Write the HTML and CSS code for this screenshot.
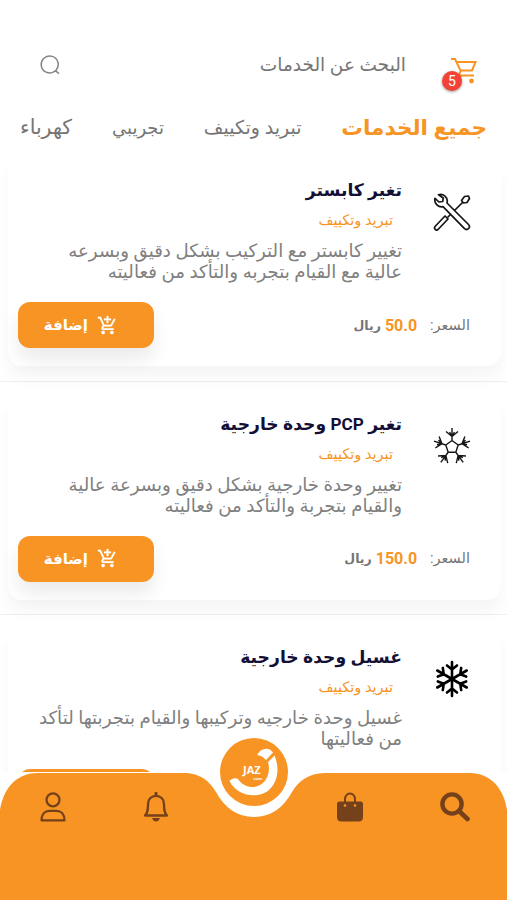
FILE: index.html
```html
<!DOCTYPE html>
<html lang="ar" dir="rtl">
<head>
    <meta charset="UTF-8">
    <meta name="viewport" content="width=device-width, initial-scale=1.0">
    <title>جميع الخدمات</title>
    <link rel="stylesheet" href="styles.css">
</head>
<body>
    <svg class="symbols" width="0" height="0">
        <symbol id="addCart" viewBox="0 0 24 24">
            <path fill="currentColor" stroke="currentColor" stroke-width="0.2" d="M11 9h2V6h3V4h-3V1h-2v3H8v2h3v3zm-4 9c-1.100 0-1.990.9-1.990 2S5.900 22 7 22s2-.9 2-2-.9-2-2-2zm10 0c-1.100 0-1.990.9-1.990 2s.89 2 1.990 2 2-.9 2-2-.9-2-2-2zm-9.830-3.250l.03-.12.9-1.630h7.450c.75 0 1.410-.41 1.750-1.030l3.860-7.010L19.420 4h-.01l-1.100 2-2.760 5H8.530l-.13-.27L6.160 6l-.95-2-.94-2H1v2h2l3.600 7.590-1.350 2.450c-.16.28-.25.61-.25.960 0 1.100.9 2 2 2h12v-2H7.420c-.13 0-.25-.11-.25-.25z"/>
        </symbol>
    </svg>

    <header class="header">
        <div class="search-row">
            <div class="cart">
                <svg width="26" height="28" viewBox="0 0 26 28" fill="none" stroke="#f79423" stroke-width="2">
                    <path d="M0 2h4l5.500 11.500h11.500l3.500-8.500H6M10 13.500l-2.500 5H23"/>
                    <circle cx="20.500" cy="24" r="2.400" fill="#f79423" stroke="none"/>
                </svg>
                <span class="badge">5</span>
            </div>
            <span class="search-text">البحث عن الخدمات</span>
            <svg class="search-icon" width="20" height="20" viewBox="0 0 20 20" fill="none" stroke="#858585" stroke-width="1.500">
                <path d="M16 15.200A8.500 8.500 0 1 0 14.200 16.700L15.600 15.800L19 18.600"/>
            </svg>
        </div>
        <nav class="tabs">
            <span class="tab active">جميع الخدمات</span>
            <span class="tab">تبريد وتكييف</span>
            <span class="tab trial">تجريبي</span>
            <span class="tab power">كهرباء</span>
        </nav>
    </header>

    <main class="list">
        <div class="item">
            <div class="card">
                <svg class="card-icon" width="38" height="38" viewBox="0 0 38 38" fill="#fff" stroke="#161616" stroke-width="1.700" stroke-linejoin="round">
                    <path d="M31 8L14.500 24.500"/>
                    <path d="M28.500 7.500l3-4 4-.5 1 2.500-2.500 4-3.500.5z"/>
                    <path d="M2 33.500L12 23l3 3L5 36.500c-2 1.500-4.500-1-3-3z"/>
                    <path d="M5.500 1.800C10 .3 15.500 4 14 10L35.500 31.500c2.800 3.200-1.500 6.300-4 4.200L10 13.700C5 14.500.8 10 2 5.300L6 9l3.700-.5.6-3.500z"/>
                </svg>
                <div class="card-body">
                    <h2 class="title">تغير كابستر</h2>
                    <p class="category">تبريد وتكييف</p>
                    <p class="desc">تغيير كابستر مع التركيب بشكل دقيق وبسرعه<br>عالية مع القيام بتجربه والتأكد من فعاليته</p>
                </div>
                <div class="card-footer">
                    <div class="price"><span>السعر:</span><b>50.0</b><span class="currency">ريال</span></div>
                    <button class="add"><svg width="21" height="21"><use href="#addCart"/></svg><span>إضافة</span></button>
                </div>
            </div>
        </div>

        <div class="item">
            <div class="card">
                <svg class="card-icon" width="38" height="38" viewBox="-19 -20 38 38" fill="none" stroke="#161616" stroke-width="1.400">
                    <g id="arm">
                        <path d="M0-6.500V-19M0-10.500L-6-15.500M0-10.500L6-15.500M0-11L-2.500-15M0-11L2.500-15"/>
                        <path d="M0-6.500L6.200-2"/>
                    </g>
                    <use href="#arm" transform="rotate(72)"/>
                    <use href="#arm" transform="rotate(144)"/>
                    <use href="#arm" transform="rotate(216)"/>
                    <use href="#arm" transform="rotate(288)"/>
                </svg>
                <div class="card-body">
                    <h2 class="title">تغير PCP وحدة خارجية</h2>
                    <p class="category">تبريد وتكييف</p>
                    <p class="desc">تغيير وحدة خارجية بشكل دقيق وبسرعة عالية<br>والقيام بتجربة والتأكد من فعاليته</p>
                </div>
                <div class="card-footer">
                    <div class="price"><span>السعر:</span><b>150.0</b><span class="currency">ريال</span></div>
                    <button class="add"><svg width="21" height="21"><use href="#addCart"/></svg><span>إضافة</span></button>
                </div>
            </div>
        </div>

        <div class="item">
            <div class="card">
                <svg class="card-icon" width="38" height="38" viewBox="-19 -19 38 38" fill="none" stroke="#000" stroke-width="2.600" stroke-linecap="round">
                    <g id="flake">
                        <path d="M0 0V-17M0-9.500L-5-13.500M0-9.500L5-13.500"/>
                    </g>
                    <use href="#flake" transform="rotate(60)"/>
                    <use href="#flake" transform="rotate(120)"/>
                    <use href="#flake" transform="rotate(180)"/>
                    <use href="#flake" transform="rotate(240)"/>
                    <use href="#flake" transform="rotate(300)"/>
                </svg>
                <div class="card-body">
                    <h2 class="title">غسيل وحدة خارجية</h2>
                    <p class="category">تبريد وتكييف</p>
                    <p class="desc">غسيل وحدة خارجيه وتركيبها والقيام بتجربتها لتأكد<br>من فعاليتها</p>
                </div>
                <div class="card-footer">
                    <div class="price"></div>
                    <button class="add"></button>
                </div>
            </div>
        </div>
    </main>

    <footer class="bottom-nav">
        <svg class="nav-shape" width="507" height="128" viewBox="0 0 507 128">
            <path fill="#f79423" d="M0 128V38C4 14 18 1 38 1H184C201 1 210 10 216 20C225 36 237 45 254 45C271 45 283 36 292 20C298 10 308 1 325 1H470C490 1 504 16 507 38V128z"/>
        </svg>
        <div class="nav-icons">
            <div class="nav-group">
                <svg width="30" height="30" viewBox="0 0 30 30" fill="none" stroke="#75411a">
                    <circle cx="12" cy="12" r="9.600" stroke-width="4.400"/>
                    <path d="M19 19l8.500 8" stroke-width="4.600" stroke-linecap="round"/>
                </svg>
                <svg width="26" height="30" viewBox="0 0 26 30">
                    <path d="M8 11V7a5 5.500 0 0 1 10 0v4" fill="none" stroke="#75411a" stroke-width="2"/>
                    <path fill="#75411a" d="M2.500 9.500h21q2.500 0 2.500 2.500v13q0 4.500-4.500 4.500h-17Q0 29.500 0 25V12q0-2.500 2.500-2.500z"/>
                    <circle cx="8" cy="13.500" r="1.300" fill="#f79423"/>
                    <circle cx="18" cy="13.500" r="1.300" fill="#f79423"/>
                </svg>
            </div>
            <div class="nav-group">
                <svg width="26" height="30" viewBox="0 0 26 30">
                    <path d="M2 23.500C5 20.500 5 17 5 12C5 7 8.500 3.800 13 3.800S21 7 21 12C21 17 21 20.500 24 23.500z" fill="none" stroke="#75411a" stroke-width="2.300" stroke-linejoin="round"/>
                    <path d="M11.500 1.200a1.500 1.500 0 0 1 3 0V4h-3zM9 26h8q-1.500 3.500-4 3.500T9 26z" fill="#75411a"/>
                </svg>
                <svg width="26" height="30" viewBox="0 0 26 30" fill="none" stroke="#75411a" stroke-width="2.300">
                    <circle cx="13" cy="7.800" r="6.500"/>
                    <path d="M1.500 28.300C1.500 22 5 18.800 9.500 18.800h7c4.500 0 8 3.200 8 9.500z" stroke-linejoin="round"/>
                </svg>
            </div>
        </div>
        <div class="logo">
            <svg width="68" height="68" viewBox="0 0 68 68" fill="#fff">
                <path d="M9.500 43C12 40.500 15 39.500 18 41C22 47 28 49.500 34 49C45 48 51.500 36 48 24L54.500 17.500C60 30 58 45 48 53C36 61 17 58 9.500 43z"/>
                <path d="M37 17Q42 8.500 50 11.500L53 14.500L46 22Q42 17.500 37 17z"/>
            </svg>
            <span class="logo-name">JAZ</span>
            <span class="logo-sub">.com</span>
        </div>
    </footer>
</body>
</html>
```

FILE: styles.css
```css
* {
    box-sizing: border-box;
}

body {
    font-family: Roboto, "DejaVu Sans", sans-serif;
    background-color: #fff;
    margin: 0;
    height: 900px;
    overflow: hidden;
    position: relative;
    color: #757575;
}

.symbols {
    display: block;
}

.header {
    height: 148px;
    padding-top: 45px;
}

.search-row {
    display: flex;
    align-items: center;
    height: 40px;
    padding: 0 30px 0 40px;
}

.cart {
    position: relative;
    width: 26px;
    height: 28px;
    margin-top: 12px;
}

.badge {
    position: absolute;
    left: -9px;
    top: 14px;
    width: 20px;
    height: 20px;
    border-radius: 50%;
    background-color: #f44336;
    color: #fff;
    font-size: 14px;
    line-height: 20px;
    text-align: center;
    box-shadow: 0 1px 3px rgba(0, 0, 0, 0.4);
}

.search-text {
    font-size: 18.5px;
    margin-right: 45px;
    margin-top: -1px;
    white-space: nowrap;
}

.search-icon {
    margin-right: auto;
}

.tabs {
    display: flex;
    align-items: center;
    justify-content: space-between;
    height: 40px;
    margin-top: 22px;
    padding: 0 20px;
    font-size: 19px;
    white-space: nowrap;
}

.tab.active {
    color: #f79423;
    font-size: 21.6px;
    font-weight: bold;
}

.tab.trial {
    font-size: 18px;
}

.tab.power {
    font-size: 20.5px;
}

.list {
    height: 624px;
    overflow: hidden;
}

.item {
    height: 233.5px;
    padding: 12px 6px 0 8px;
    border-bottom: 1px solid #f0f0f0;
}

.card {
    position: relative;
    height: 206px;
    padding: 18px 0;
    background-color: #fff;
    border-radius: 14px;
    box-shadow: 0 12px 16px rgba(0, 0, 0, 0.04);
}

.card-icon {
    position: absolute;
    right: 30px;
    top: 33px;
}

.card-body {
    padding-right: 99px;
    white-space: nowrap;
}

.title {
    margin: 0;
    color: #130f35;
    font-size: 17.2px;
    line-height: 24px;
}

.category {
    margin: 8px 9px 10px 0;
    color: #f79423;
    font-size: 14.5px;
    line-height: 21px;
    height: 20px;
}

.desc {
    margin: 0;
    height: 42px;
    color: #808080;
    font-size: 18.2px;
    line-height: 21px;
}

.card-footer {
    display: flex;
    justify-content: space-between;
    align-items: center;
    margin-top: 20px;
    padding: 0 31px 0 10px;
}

.price {
    display: flex;
    align-items: center;
    font-size: 14.5px;
}

.price b {
    margin: 0 13px 0 4px;
    color: #f79423;
    font-size: 16px;
}

.currency {
    font-size: 12.5px;
    font-weight: bold;
}

.add {
    display: flex;
    align-items: center;
    width: 136px;
    height: 46px;
    padding: 0 36px 0 0;
    gap: 9px;
    border: none;
    border-radius: 12px;
    background-color: #f79423;
    color: #fff;
    font-family: inherit;
    font-size: 15px;
    font-weight: bold;
    box-shadow: 0 12px 18px rgba(0, 0, 0, 0.08);
}

.bottom-nav {
    position: absolute;
    left: 0;
    bottom: 0;
    width: 507px;
    height: 128px;
    background-color: #fff;
}

.nav-shape {
    display: block;
}

.nav-icons {
    position: absolute;
    top: 20px;
    left: 40px;
    right: 37px;
    display: flex;
    justify-content: space-between;
}

.nav-group {
    display: flex;
    gap: 77px;
}

.logo {
    position: absolute;
    left: 220px;
    top: -34px;
    width: 68px;
    height: 68px;
    border-radius: 50%;
    background-color: #f79423;
    color: #fff;
}

.logo-name {
    position: absolute;
    left: 23px;
    top: 26px;
    font: bold 11px/11px "Open Sans", sans-serif;
}

.logo-sub {
    position: absolute;
    right: 25px;
    top: 39px;
    font: bold 4px/4px "Open Sans", sans-serif;
}
```
